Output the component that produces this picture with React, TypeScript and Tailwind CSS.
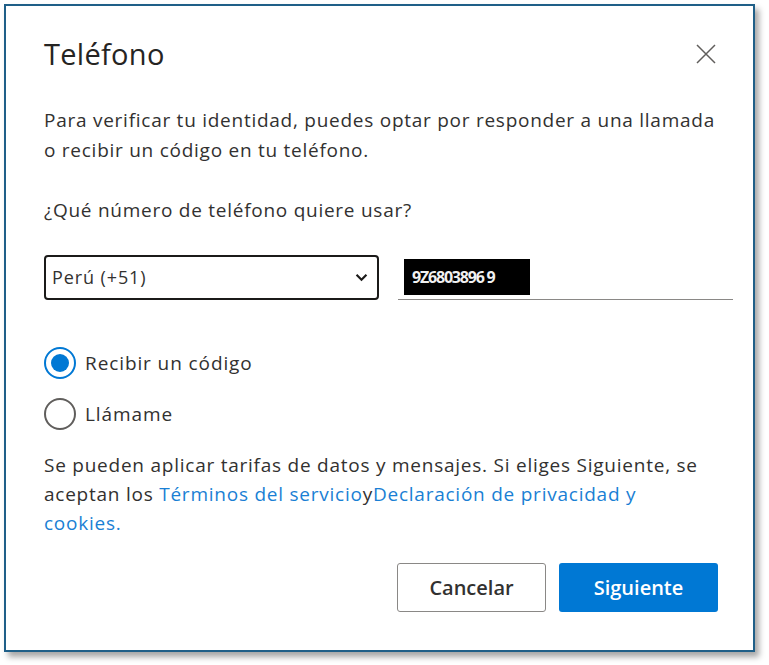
import { useState } from 'react';

const font = { fontFamily: '"Open Sans", "Noto Sans", sans-serif' };

function Radio({ checked, label, onClick }: { checked: boolean; label: string; onClick: () => void }) {
  return (
    <button onClick={onClick} className="flex items-center gap-[9px] h-[32px] text-left">
      <span
        className={`w-[32px] h-[32px] rounded-full border-2 flex items-center justify-center bg-white ${
          checked ? 'border-[#0078d4]' : 'border-[#605e5c]'
        }`}
      >
        {checked && <span className="w-[18px] h-[18px] rounded-full bg-[#0078d4]" />}
      </span>
      <span className="text-[19px] tracking-[0.9px] text-[#323130]">{label}</span>
    </button>
  );
}

export default function App() {
  const [method, setMethod] = useState<'code' | 'call'>('code');

  return (
    <div className="w-[769px] h-[665px] bg-white" style={font}>
      <div className="ml-[4px] mt-[4px] w-[751px] h-[648px] border-2 border-[#1f5f88] bg-white shadow-[4px_5px_6px_rgba(0,0,0,0.35)] pl-[38px] pr-[20px] pt-[30px]">
        {/* cabecera */}
        <div className="flex items-center justify-between h-[36px]">
          <h1 className="text-[29px] leading-[36px] tracking-[0.3px] text-[#252423]">Teléfono</h1>
          <button className="mr-[16px] w-[22px] h-[22px] flex items-center justify-center">
            <svg viewBox="0 0 22 22" width="22" height="22">
              <path d="M2 2 L20 20 M20 2 L2 20" stroke="#605e5c" strokeWidth="1.5" fill="none" />
            </svg>
          </button>
        </div>

        <p className="mt-[33px] text-[19px] leading-[30px] tracking-[0.74px] text-[#323130] whitespace-nowrap">
          Para verificar tu identidad, puedes optar por responder a una llamada
          <br />o recibir un código en tu teléfono.
        </p>

        <p className="mt-[30px] text-[19px] leading-[30px] tracking-[0.74px] text-[#323130]">
          ¿Qué número de teléfono quiere usar?
        </p>

        {/* número */}
        <div className="mt-[30px] flex items-end gap-[19px]">
          <div className="w-[335px] h-[45px] border-2 border-[#1b1a19] rounded-[4px] flex items-center justify-between pl-[6px] pr-[9px]">
            <span className="text-[18px] tracking-[0.9px] text-[#323130]">Perú (+51)</span>
            <svg viewBox="0 0 14 10" width="13" height="9">
              <path d="M1.5 2 L7 7.5 L12.5 2" stroke="#1b1a19" strokeWidth="2.4" fill="none" />
            </svg>
          </div>
          <div className="w-[335px] h-[45px] border-b-[1.5px] border-[#8a8886] flex items-start pl-[6px] pt-[4px]">
            <span className="w-[126px] h-[36px] bg-black flex items-center pl-[8px] text-[#f0f0f0] text-[16px] font-bold tracking-[-1.2px]">
              9Z6803896 9
            </span>
          </div>
        </div>

        {/* método */}
        <div className="mt-[47px] flex flex-col gap-[19px] items-start">
          <Radio checked={method === 'code'} label="Recibir un código" onClick={() => setMethod('code')} />
          <Radio checked={method === 'call'} label="Llámame" onClick={() => setMethod('call')} />
        </div>

        <p className="mt-[21px] text-[19px] leading-[29px] tracking-[0.76px] text-[#323130] whitespace-nowrap">
          Se pueden aplicar tarifas de datos y mensajes. Si eliges Siguiente, se
          <br />
          aceptan los <a className="text-[#1a7fd4]">Términos del servicio</a>y
          <a className="text-[#1a7fd4]">Declaración de privacidad y</a>
          <br />
          <a className="text-[#1a7fd4]">cookies.</a>
        </p>

        <div className="mt-[25px] flex justify-end gap-[13px] pr-[15px]">
          <button className="w-[149px] h-[49px] border-[1.5px] border-[#8a8886] rounded-[3px] bg-white text-[20px] font-semibold text-[#323130]">
            Cancelar
          </button>
          <button className="w-[159px] h-[49px] rounded-[3px] bg-[#0078d4] text-[20px] font-semibold text-white">
            Siguiente
          </button>
        </div>
      </div>
    </div>
  );
}
